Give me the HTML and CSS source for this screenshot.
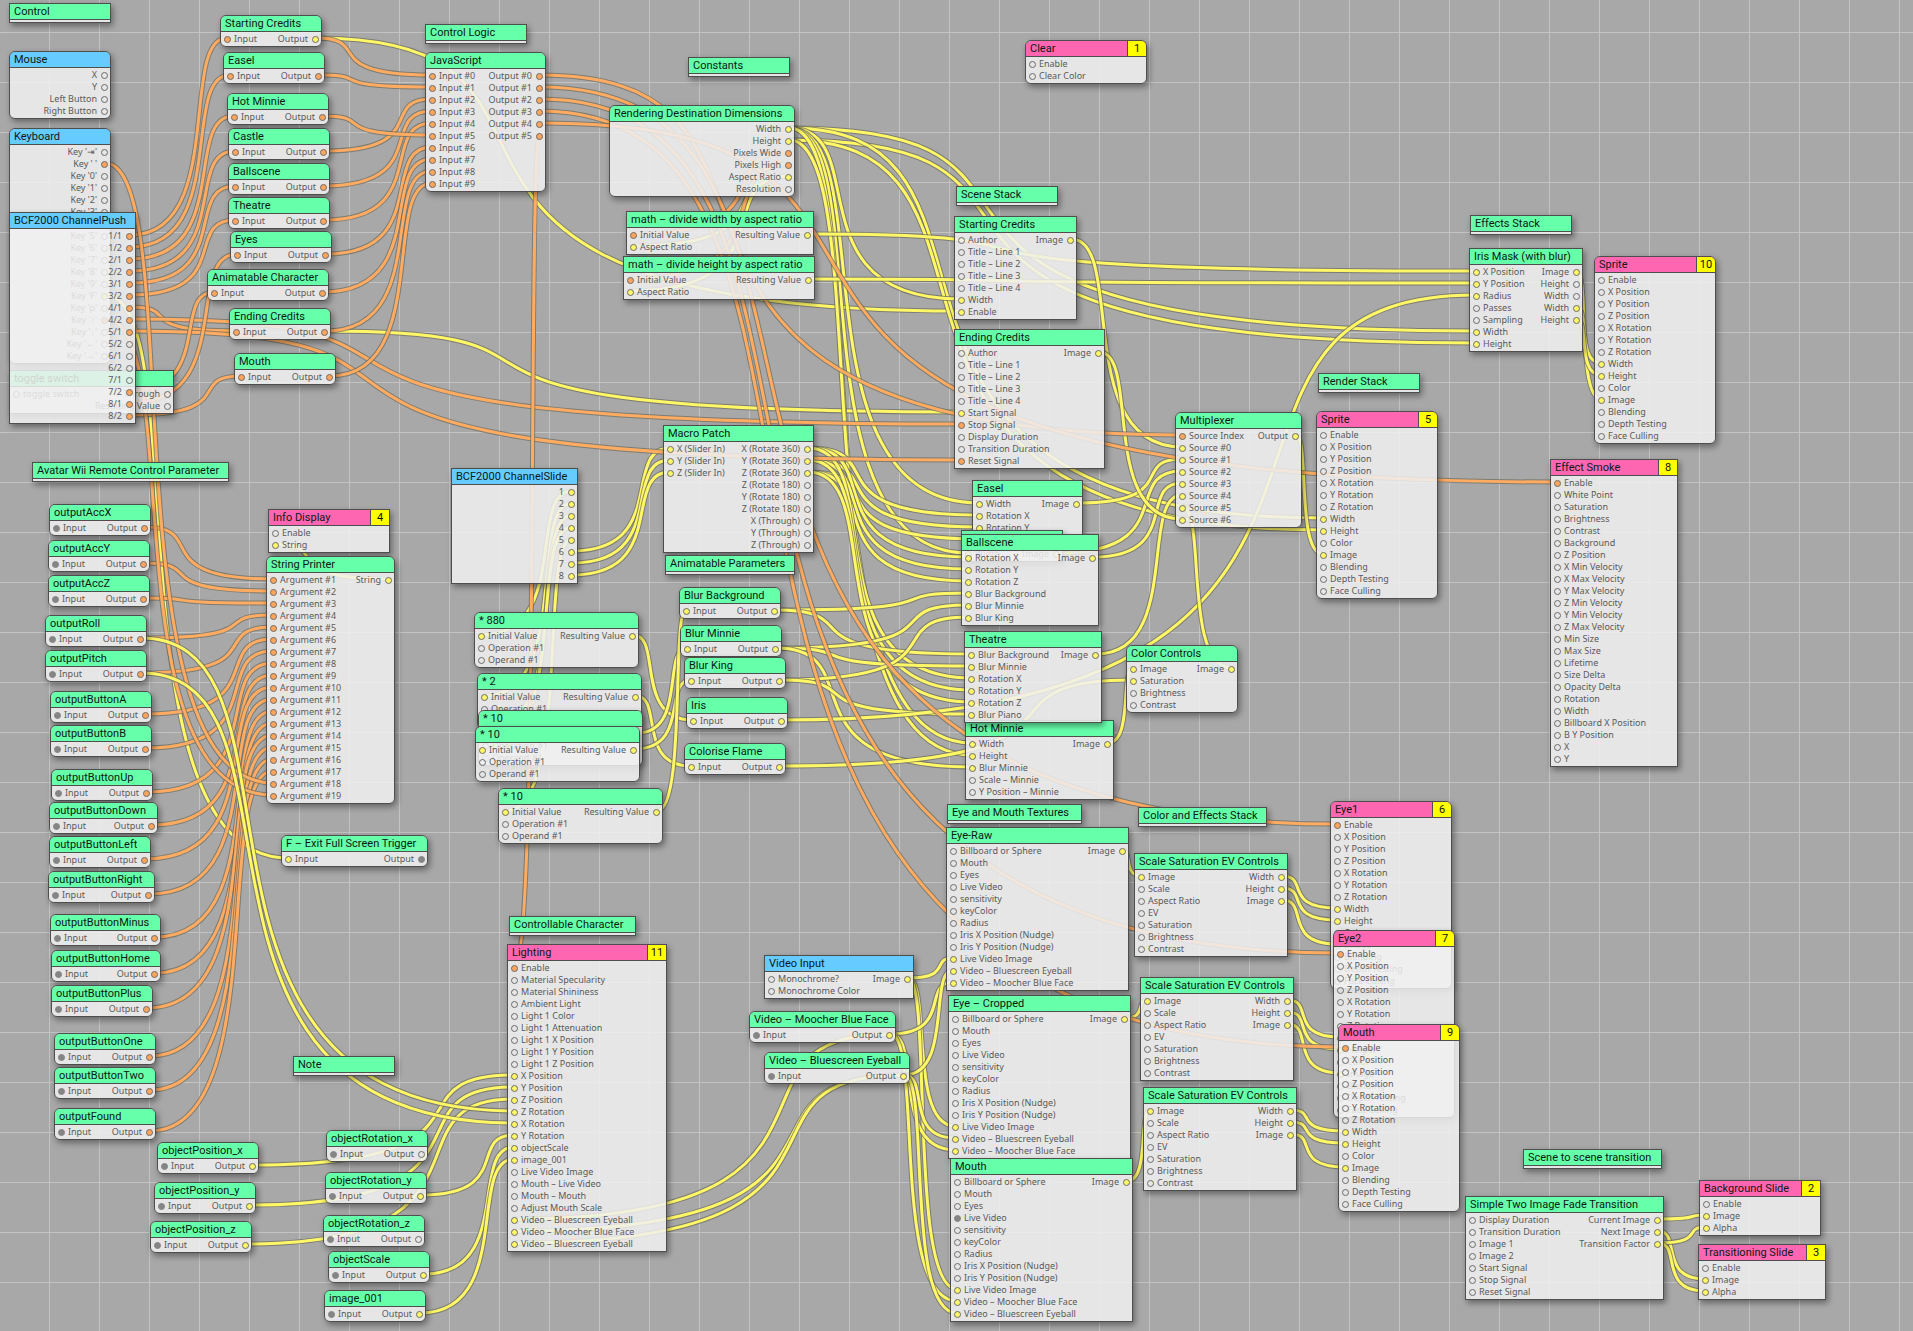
FILE: index.html
```html
<!DOCTYPE html>
<html lang="en">
<head>
<meta charset="utf-8">
<meta name="viewport" content="width=device-width, initial-scale=1">
<title>Composition</title>
<link rel="stylesheet" href="styles.css">
</head>
<body>
<main class="canvas" id="canvas">
  <svg class="wires" id="wires" aria-hidden="true"></svg>
</main>
<script src="patches.js"></script>
</body>
</html>
```
FILE: styles.css
```css
* {
  box-sizing: border-box;
}

body {
  margin: 0;
  background: #a8a8a8;
}

.canvas {
  position: relative;
  min-height: 100vh;
  overflow: hidden;
  background-color: #a8a8a8;
  background-image:
    linear-gradient(to right, #c3c3c3 1px, transparent 1px),
    linear-gradient(to bottom, #c3c3c3 1px, transparent 1px);
  background-size: 50px 50px;
  background-position: 49px 32px;
  font-family: "Noto Sans", "Lucida Grande", sans-serif;
  font-size: 9px;
  line-height: 12px;
  color: #5a5a5a;
}

.wires {
  position: absolute;
  inset: 0;
  width: 100%;
  height: 100%;
}

.wires path {
  fill: none;
}

.wire-edge {
  stroke: #6a6a5c;
  stroke-opacity: 0.7;
  stroke-width: 5;
}

.wire-number {
  stroke: #fff766;
  stroke-width: 3;
}

.wire-boolean {
  stroke: #ffab61;
  stroke-width: 3;
}

.patch {
  position: absolute;
  border: 1px solid #4e4e4e;
  box-shadow: 2px 3px 6px rgba(0, 0, 0, 0.4);
}

.patch.round {
  border-radius: 6px;
}

.patch-head {
  display: flex;
  height: 16px;
  border-bottom: 1px solid #4e4e4e;
  overflow: hidden;
}

.round .patch-head {
  border-radius: 5px 5px 0 0;
}

.patch-title {
  flex: 1;
  margin: 0;
  padding-left: 4px;
  font-family: Roboto, "Lucida Grande", sans-serif;
  font-size: 11px;
  font-weight: 400;
  line-height: 15px;
  color: #0c1a12;
  white-space: nowrap;
}

.badge {
  width: 19px;
  border-left: 1px solid #4e4e4e;
  background: #ffff00;
  font-family: Roboto, "Lucida Grande", sans-serif;
  font-size: 11px;
  line-height: 15px;
  text-align: center;
  color: #111;
}

.processor .patch-head {
  background: #66ffaa;
}

.provider .patch-head {
  background: #66ccff;
}

.consumer .patch-head {
  background: #ff66b2;
}

.patch-body {
  display: flex;
  justify-content: space-between;
  padding: 1px 2px 1px 3px;
  background: rgba(240, 240, 240, 0.86);
}

.round .patch-body {
  border-radius: 0 0 5px 5px;
}

.ports {
  margin: 0;
  padding: 0;
  list-style: none;
}

.port {
  display: flex;
  align-items: center;
  gap: 3px;
  height: 12px;
  white-space: nowrap;
}

.outputs .port {
  flex-direction: row-reverse;
  gap: 4px;
}

.dot {
  width: 7px;
  height: 7px;
  border: 1px solid #6b6b6b;
  border-radius: 50%;
}

.dot.number {
  background: #fff766;
}

.dot.boolean {
  background: #ffa55c;
}

.dot.published {
  background: #858585;
  border-color: #858585;
}
```
FILE: patches.js
```js
// Port prefixes: o = unconnected, y = number/image, a = boolean/index, g = published.
const DOTS = { o: "", y: "number", a: "boolean", g: "published" };
const IO = ["a Input", "a Output"];
const GREY_BOOL = ["g Input", "a Output"];
const GREY_NUM = ["g Input", "y Output"];
const NUM = ["y Input", "y Output"];
const MATH = ["y Initial Value|o Operation #1|o Operand #1", "y Resulting Value"];
const SPRITE = "Enable|o X Position|o Y Position|o Z Position|o X Rotation|o Y Rotation|o Z Rotation|y Width|y Height|o Color|y Image|o Blending|o Depth Testing|o Face Culling";
const EYE = "o Billboard or Sphere|o Mouth|o Eyes|o Live Video|o sensitivity|o keyColor|o Radius|o Iris X Position (Nudge)|o Iris Y Position (Nudge)|y Live Video Image|y Video – Bluescreen Eyeball|y Video – Moocher Blue Face";
const SCALE = ["y Image|o Scale|o Aspect Ratio|o EV|o Saturation|o Brightness|o Contrast", "y Width|y Height|y Image"];
const range = (from, to, make) => Array.from({ length: to - from + 1 }, (_, i) => make(from + i)).join("|");

// id, kind (p processor, b provider, c consumer; capital = rounded), x, y, width, title, inputs, outputs, layer
const PATCHES = [
  ["nControl", "p", 9, 3, 102, "Control"],
  ["mouse", "B", 9, 51, 102, "Mouse", "", "o X|o Y|o Left Button|o Right Button"],
  ["keys", "B", 9, 128, 102, "Keyboard", "", "o Key '⇥'|a Key ' '|o Key '0'|o Key '1'|o Key '2'|o Key '3'|o Key '4'|o Key '5'|o Key '6'|o Key '7'|o Key '8'|o Key '9'|y Key 'F'|o Key 'p'|a Key '↑'|o Key '↓'|o Key '←'|o Key '→'"],
  ["toggle", "p", 9, 370, 165, "toggle switch", "o toggle switch", "o Through|o Resulting Value"],
  ["push", "b", 9, 212, 127, "BCF2000 ChannelPush", "", "a 1/1|a 1/2|a 2/1|a 2/2|a 3/1|a 3/2|a 4/1|a 4/2|a 5/1|o 5/2|o 6/1|o 6/2|o 7/1|a 7/2|a 8/1|a 8/2"],
  ["mStart", "P", 220, 15, 102, "Starting Credits", "a Input", "y Output"],
  ["mEasel", "P", 223, 52, 102, "Easel", ...IO],
  ["mHot", "P", 227, 93, 102, "Hot Minnie", ...IO],
  ["mCastle", "P", 228, 128, 102, "Castle", ...IO],
  ["mBall", "P", 228, 163, 102, "Ballscene", ...IO],
  ["mTheatre", "P", 228, 197, 102, "Theatre", ...IO],
  ["mEyes", "P", 230, 231, 102, "Eyes", ...IO],
  ["mAnim", "P", 207, 269, 122, "Animatable Character", ...IO],
  ["mEnd", "P", 229, 308, 102, "Ending Credits", ...IO],
  ["mMouth", "P", 234, 353, 102, "Mouth", ...IO],
  ["nLogic", "p", 425, 24, 102, "Control Logic"],
  ["js", "P", 425, 52, 121, "JavaScript", range(0, 9, i => "a Input #" + i), range(0, 5, i => "a Output #" + i)],
  ["nConst", "p", 688, 57, 102, "Constants"],
  ["dims", "P", 609, 105, 186, "Rendering Destination Dimensions", "", "y Width|y Height|a Pixels Wide|a Pixels High|y Aspect Ratio|o Resolution"],
  ["divW", "p", 626, 211, 188, "math – divide width by aspect ratio", "a Initial Value|y Aspect Ratio", "y Resulting Value"],
  ["divH", "p", 623, 256, 192, "math – divide height by aspect ratio", "a Initial Value|y Aspect Ratio", "y Resulting Value"],
  ["nScene", "p", 956, 186, 102, "Scene Stack"],
  ["sStart", "p", 954, 216, 123, "Starting Credits", "o Author|" + range(1, 4, i => "o Title – Line " + i) + "|y Width|y Enable", "y Image"],
  ["sEnd", "p", 954, 329, 151, "Ending Credits", "o Author|" + range(1, 4, i => "o Title – Line " + i) + "|y Start Signal|a Stop Signal|o Display Duration|o Transition Duration|a Reset Signal", "y Image"],
  ["clear", "C", 1025, 40, 122, "Clear", "o Enable|o Clear Color", "", 1],
  ["mux", "P", 1175, 412, 127, "Multiplexer", "a Source Index|" + range(0, 6, i => "y Source #" + i), "y Output"],
  ["nRender", "p", 1318, 373, 102, "Render Stack"],
  ["sprite5", "C", 1316, 411, 122, "Sprite", "o " + SPRITE, "", 5],
  ["nEffects", "p", 1470, 215, 102, "Effects Stack"],
  ["iris", "p", 1469, 248, 114, "Iris Mask (with blur)", "y X Position|y Y Position|y Radius|o Passes|o Sampling|y Width|y Height", "y Image|o Height|o Width|y Width|y Height"],
  ["sprite10", "C", 1594, 256, 122, "Sprite", "o " + SPRITE, "", 10],
  ["smoke", "c", 1550, 459, 128, "Effect Smoke", "a Enable|o White Point|o Saturation|o Brightness|o Contrast|o Background|o Z Position|o X Min Velocity|o X Max Velocity|o Y Max Velocity|o Z Min Velocity|o Y Min Velocity|o Z Max Velocity|o Min Size|o Max Size|o Lifetime|o Size Delta|o Opacity Delta|o Rotation|o Width|o Billboard X Position|o B Y Position|o X|o Y", "", 8],
  ["nAvatar", "p", 32, 462, 197, "Avatar Wii Remote Control Parameter"],
  ["accX", "P", 49, 504, 102, "outputAccX", ...GREY_BOOL],
  ["accY", "P", 48, 540, 102, "outputAccY", ...GREY_BOOL],
  ["accZ", "P", 48, 575, 102, "outputAccZ", ...GREY_BOOL],
  ["roll", "P", 45, 615, 102, "outputRoll", ...GREY_BOOL],
  ["pitch", "P", 45, 650, 102, "outputPitch", ...GREY_BOOL],
  ["btnA", "P", 50, 691, 102, "outputButtonA", ...GREY_BOOL],
  ["btnB", "P", 50, 725, 102, "outputButtonB", ...GREY_BOOL],
  ["btnUp", "P", 51, 769, 102, "outputButtonUp", ...GREY_BOOL],
  ["btnDown", "P", 49, 802, 109, "outputButtonDown", ...GREY_BOOL],
  ["btnLeft", "P", 49, 836, 102, "outputButtonLeft", ...GREY_BOOL],
  ["btnRight", "P", 48, 871, 107, "outputButtonRight", ...GREY_BOOL],
  ["btnMinus", "P", 50, 914, 111, "outputButtonMinus", ...GREY_BOOL],
  ["btnHome", "P", 51, 950, 110, "outputButtonHome", ...GREY_BOOL],
  ["btnPlus", "P", 51, 985, 102, "outputButtonPlus", ...GREY_BOOL],
  ["btnOne", "P", 54, 1033, 102, "outputButtonOne", ...GREY_BOOL],
  ["btnTwo", "P", 54, 1067, 102, "outputButtonTwo", ...GREY_BOOL],
  ["found", "P", 54, 1108, 102, "outputFound", ...GREY_BOOL],
  ["info", "c", 268, 509, 122, "Info Display", "o Enable|y String", "", 4],
  ["printer", "P", 266, 556, 129, "String Printer", range(1, 19, i => "a Argument #" + i), "y String"],
  ["exit", "P", 281, 835, 147, "F – Exit Full Screen Trigger", "y Input", "g Output"],
  ["slide", "b", 451, 468, 127, "BCF2000 ChannelSlide", "", range(1, 8, i => "y " + i)],
  ["macro", "p", 663, 425, 151, "Macro Patch", "y X (Slider In)|y Y (Slider In)|y Z (Slider In)", "y X (Rotate 360)|y Y (Rotate 360)|y Z (Rotate 360)|o Z (Rotate 180)|o Y (Rotate 180)|o Z (Rotate 180)|o X (Through)|o Y (Through)|o Z (Through)"],
  ["nAnim", "p", 665, 555, 130, "Animatable Parameters"],
  ["blurBg", "P", 679, 587, 102, "Blur Background", ...NUM],
  ["blurMin", "P", 680, 625, 102, "Blur Minnie", ...NUM],
  ["blurKing", "P", 684, 657, 102, "Blur King", ...NUM],
  ["irisIn", "P", 686, 697, 102, "Iris", ...NUM],
  ["flame", "P", 684, 743, 102, "Colorise Flame", ...NUM],
  ["x880", "P", 474, 612, 165, "* 880", ...MATH],
  ["x2", "P", 477, 673, 165, "* 2", ...MATH],
  ["x10a", "P", 478, 710, 165, "* 10", ...MATH],
  ["x10b", "P", 475, 726, 165, "* 10", ...MATH],
  ["x10c", "P", 498, 788, 165, "* 10", ...MATH],
  ["easel", "p", 972, 480, 111, "Easel", "y Width|y Rotation X|y Rotation Y|y Rotation Z", "y Image"],
  ["castle", "p", 961, 530, 102, "Castle", "y Width", "y Image"],
  ["ball", "p", 961, 534, 138, "Ballscene", "y Rotation X|y Rotation Y|y Rotation Z|y Blur Background|y Blur Minnie|y Blur King", "y Image"],
  ["hot", "p", 965, 720, 149, "Hot Minnie", "y Width|y Height|y Blur Minnie|o Scale – Minnie|o Y Position – Minnie", "y Image"],
  ["theatre", "p", 964, 631, 138, "Theatre", "y Blur Background|y Blur Minnie|y Rotation X|y Rotation Y|y Rotation Z|y Blur Piano", "y Image"],
  ["color", "P", 1126, 645, 112, "Color Controls", "y Image|y Saturation|o Brightness|o Contrast", "y Image"],
  ["nEyes", "p", 947, 804, 135, "Eye and Mouth Textures"],
  ["nColor", "p", 1138, 807, 129, "Color and Effects Stack"],
  ["eyeRaw", "p", 946, 827, 183, "Eye-Raw", EYE, "y Image"],
  ["eyeCrop", "p", 948, 995, 183, "Eye – Cropped", EYE, "y Image"],
  ["mouthTex", "p", 950, 1158, 183, "Mouth", "o Billboard or Sphere|o Mouth|o Eyes|g Live Video|o sensitivity|o keyColor|o Radius|o Iris X Position (Nudge)|o Iris Y Position (Nudge)|y Live Video Image|y Video – Moocher Blue Face|y Video – Bluescreen Eyeball", "y Image"],
  ["scale1", "p", 1134, 853, 154, "Scale Saturation EV Controls", ...SCALE],
  ["scale2", "p", 1140, 977, 154, "Scale Saturation EV Controls", ...SCALE],
  ["scale3", "p", 1143, 1087, 154, "Scale Saturation EV Controls", ...SCALE],
  ["eye1", "C", 1330, 801, 122, "Eye1", "a " + SPRITE, "", 6],
  ["eye2", "C", 1333, 930, 122, "Eye2", "a " + SPRITE, "", 7],
  ["mouth", "C", 1338, 1024, 122, "Mouth", "a " + SPRITE, "", 9],
  ["nNote", "p", 293, 1056, 102, "Note"],
  ["posX", "P", 157, 1142, 102, "objectPosition_x", ...GREY_NUM],
  ["posY", "P", 154, 1182, 102, "objectPosition_y", ...GREY_NUM],
  ["posZ", "P", 150, 1221, 102, "objectPosition_z", ...GREY_NUM],
  ["rotX", "P", 326, 1130, 102, "objectRotation_x", "g Input", "o Output"],
  ["rotY", "P", 325, 1172, 102, "objectRotation_y", ...GREY_NUM],
  ["rotZ", "P", 323, 1215, 102, "objectRotation_z", "g Input", "o Output"],
  ["objScale", "P", 328, 1251, 102, "objectScale", ...GREY_NUM],
  ["image1", "P", 324, 1290, 102, "image_001", ...GREY_NUM],
  ["nChar", "p", 509, 916, 127, "Controllable Character"],
  ["light", "c", 507, 944, 160, "Lighting", "a Enable|o Material Specularity|o Material Shininess|o Ambient Light|o Light 1 Color|o Light 1 Attenuation|o Light 1 X Position|o Light 1 Y Position|o Light 1 Z Position|y X Position|y Y Position|y Z Position|y Z Rotation|y X Rotation|y Y Rotation|y objectScale|y image_001|o Live Video Image|o Mouth – Live Video|o Mouth – Mouth|o Adjust Mouth Scale|y Video – Bluescreen Eyeball|y Video – Moocher Blue Face|y Video – Bluescreen Eyeball", "", 11],
  ["video", "b", 764, 955, 150, "Video Input", "o Monochrome?|o Monochrome Color", "y Image"],
  ["moocher", "P", 749, 1011, 147, "Video – Moocher Blue Face", ...GREY_NUM],
  ["bluescreen", "P", 764, 1052, 146, "Video – Bluescreen Eyeball", ...GREY_NUM],
  ["nTrans", "p", 1523, 1149, 139, "Scene to scene transition"],
  ["fade", "p", 1465, 1196, 199, "Simple Two Image Fade Transition", "o Display Duration|o Transition Duration|o Image 1|o Image 2|o Start Signal|o Stop Signal|o Reset Signal", "y Current Image|y Next Image|y Transition Factor"],
  ["bgSlide", "c", 1699, 1180, 122, "Background Slide", "o Enable|y Image|y Alpha", "", 2],
  ["trSlide", "c", 1698, 1244, 128, "Transitioning Slide", "o Enable|y Image|y Alpha", "", 3]
];

// from.output>to.input
const NUMBER_WIRES = `
mStart.0>sStart.6 mEnd.0>sEnd.5 keys.12>exit.0
dims.0>iris.5 dims.1>iris.6 dims.0>sprite5.7 dims.1>sprite5.8 dims.0>sStart.5
dims.0>easel.0 dims.0>castle.0 dims.0>hot.0 dims.1>hot.1
dims.4>divW.1 dims.4>divH.1 divW.0>iris.0 divH.0>iris.1
slide.5>macro.0 slide.6>macro.1 slide.7>macro.2
slide.0>x880.0 slide.1>x2.0 slide.2>x10a.0 slide.3>x10b.0 slide.4>x10c.0
x880.0>irisIn.0 x2.0>flame.0 x10a.0>blurMin.0 x10b.0>blurKing.0 x10c.0>blurBg.0
macro.0>easel.1 macro.1>easel.2 macro.2>easel.3
macro.0>ball.0 macro.1>ball.1 macro.2>ball.2
macro.0>theatre.2 macro.1>theatre.3 macro.2>theatre.4
blurBg.0>ball.3 blurBg.0>theatre.0
blurMin.0>ball.4 blurMin.0>theatre.1 blurMin.0>hot.2
blurKing.0>ball.5 blurKing.0>theatre.5
irisIn.0>iris.2 flame.0>color.1 hot.0>color.0
sStart.0>mux.1 easel.0>mux.2 castle.0>mux.3 ball.0>mux.4 theatre.0>mux.5 color.0>mux.6 sEnd.0>mux.7
mux.0>sprite5.10 iris.0>sprite10.10 iris.3>sprite10.7 iris.4>sprite10.8
eyeRaw.0>scale1.0 eyeCrop.0>scale2.0 mouthTex.0>scale3.0
scale1.0>eye1.7 scale1.1>eye1.8 scale1.2>eye1.10
scale2.0>eye2.7 scale2.1>eye2.8 scale2.2>eye2.10
scale3.0>mouth.7 scale3.1>mouth.8 scale3.2>mouth.10
video.0>eyeRaw.9 video.0>eyeCrop.9 video.0>mouthTex.9
moocher.0>eyeRaw.11 moocher.0>eyeCrop.11 moocher.0>mouthTex.10
bluescreen.0>eyeRaw.10 bluescreen.0>eyeCrop.10 bluescreen.0>mouthTex.11
moocher.0>light.21 bluescreen.0>light.22 bluescreen.0>light.23
posX.0>light.9 posY.0>light.10 posZ.0>light.11 rotY.0>light.14 objScale.0>light.15 image1.0>light.16
printer.0>info.1
fade.0>bgSlide.1 fade.1>trSlide.1 fade.2>bgSlide.2 fade.2>trSlide.2`;

const BOOLEAN_WIRES = `
push.0>mStart.0 push.1>mEasel.0 push.2>mHot.0 push.3>mCastle.0 push.4>mBall.0 push.5>mTheatre.0
push.6>mEnd.0 push.7>sEnd.6 push.8>sEnd.9 push.13>mAnim.0 push.14>mEyes.0 push.15>mMouth.0
dims.2>divW.0 dims.3>divH.0
mStart.0>js.0 mEasel.0>js.1 mCastle.0>js.2 mBall.0>js.3 mTheatre.0>js.4 mHot.0>js.5
mEyes.0>js.6 mAnim.0>js.7 mEnd.0>js.8 mMouth.0>js.9
js.0>mux.0 js.1>eye1.0 js.2>eye2.0 js.3>mouth.0 js.4>smoke.0 js.5>light.0
accX.0>printer.0 accY.0>printer.1 accZ.0>printer.2 roll.0>printer.3 pitch.0>printer.4
btnA.0>printer.5 btnB.0>printer.6 btnUp.0>printer.7 btnDown.0>printer.8 btnLeft.0>printer.9
btnRight.0>printer.10 btnMinus.0>printer.11 btnHome.0>printer.12 btnPlus.0>printer.13
btnOne.0>printer.14 btnTwo.0>printer.15 found.0>printer.16 keys.1>printer.17 keys.14>printer.18`;

const TOP_WIRES = "roll.0>light.12 pitch.0>light.13";

const canvas = document.getElementById("canvas");
const KINDS = { p: "processor", b: "provider", c: "consumer" };
const places = {};

function make(tag, className, text) {
  const element = document.createElement(tag);
  element.className = className;
  if (text !== undefined) element.textContent = text;
  return element;
}

function portList(spec, side) {
  const list = make("ul", "ports " + side);
  if (!spec) return list;
  for (const item of spec.split("|")) {
    const port = make("li", "port");
    port.append(make("span", "dot " + DOTS[item[0]]), make("span", "label", item.slice(2)));
    list.append(port);
  }
  return list;
}

for (const [id, kind, x, y, width, title, inputs, outputs, layer] of PATCHES) {
  places[id] = { x, y, width };
  const lower = kind.toLowerCase();
  const patch = make("section", "patch " + KINDS[lower] + (kind === lower ? "" : " round"));
  patch.style.cssText = `left:${x}px;top:${y}px;width:${width}px`;
  const head = make("header", "patch-head");
  head.append(make("h2", "patch-title", title));
  if (layer) head.append(make("span", "badge", layer));
  const body = make("div", "patch-body");
  body.append(portList(inputs, "inputs"), portList(outputs, "outputs"));
  patch.append(head, body);
  canvas.append(patch);
}

// Cables sag: the steep part of the curve sits beside the higher end.
function wirePath(wire) {
  const [from, to] = wire.split(">").map(end => end.split("."));
  const source = places[from[0]];
  const target = places[to[0]];
  const x0 = source.x + source.width - 6;
  const y0 = source.y + 23 + 12 * from[1];
  const x1 = target.x + 7;
  const y1 = target.y + 23 + 12 * to[1];
  const middle = (x0 + x1) / 2;
  return y1 >= y0
    ? `M${x0} ${y0}C${middle} ${y0} ${x0} ${y1} ${x1} ${y1}`
    : `M${x0} ${y0}C${x1} ${y0} ${middle} ${y1} ${x1} ${y1}`;
}

function drawWires(list, className) {
  return list.trim().split(/\s+/).map(wire => {
    const path = wirePath(wire);
    return `<path class="wire-edge" d="${path}"/><path class="${className}" d="${path}"/>`;
  }).join("");
}

document.getElementById("wires").innerHTML =
  drawWires(NUMBER_WIRES, "wire-number") +
  drawWires(BOOLEAN_WIRES, "wire-boolean") +
  drawWires(TOP_WIRES, "wire-number");
```
